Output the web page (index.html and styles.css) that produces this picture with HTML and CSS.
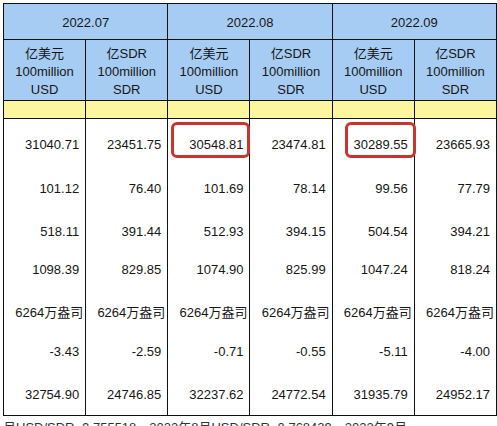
FILE: index.html
```html
<!DOCTYPE html>
<html lang="zh">
<head>
  <meta charset="UTF-8" />
  <meta name="viewport" content="width=device-width, initial-scale=1.0" />
  <title>外汇储备 2022.07 - 2022.09</title>
  <link rel="stylesheet" href="styles.css">
</head>
<body>
  <table class="reserve-table">
    <colgroup>
      <col><col><col><col><col><col>
    </colgroup>
    <thead>
      <tr class="month-row">
        <th colspan="2">2022.07</th>
        <th colspan="2">2022.08</th>
        <th colspan="2">2022.09</th>
      </tr>
      <tr class="unit-row">
        <th>亿美元<br>100million<br>USD</th>
        <th>亿SDR<br>100million<br>SDR</th>
        <th>亿美元<br>100million<br>USD</th>
        <th>亿SDR<br>100million<br>SDR</th>
        <th>亿美元<br>100million<br>USD</th>
        <th>亿SDR<br>100million<br>SDR</th>
      </tr>
      <tr class="spacer-row">
        <th></th><th></th><th></th><th></th><th></th><th></th>
      </tr>
    </thead>
    <tbody>
      <tr class="r1">
        <td>31040.71</td>
        <td>23451.75</td>
        <td class="marked"><span class="mark mark-a"></span>30548.81</td>
        <td>23474.81</td>
        <td class="marked"><span class="mark mark-b"></span>30289.55</td>
        <td>23665.93</td>
      </tr>
      <tr class="r2">
        <td>101.12</td><td>76.40</td><td>101.69</td><td>78.14</td><td>99.56</td><td>77.79</td>
      </tr>
      <tr class="r3">
        <td>518.11</td><td>391.44</td><td>512.93</td><td>394.15</td><td>504.54</td><td>394.21</td>
      </tr>
      <tr class="r4">
        <td>1098.39</td><td>829.85</td><td>1074.90</td><td>825.99</td><td>1047.24</td><td>818.24</td>
      </tr>
      <tr class="r5">
        <td>6264万盎司</td><td>6264万盎司</td><td>6264万盎司</td><td>6264万盎司</td><td>6264万盎司</td><td>6264万盎司</td>
      </tr>
      <tr class="r6">
        <td>-3.43</td><td>-2.59</td><td>-0.71</td><td>-0.55</td><td>-5.11</td><td>-4.00</td>
      </tr>
      <tr class="r7">
        <td>32754.90</td><td>24746.85</td><td>32237.62</td><td>24772.54</td><td>31935.79</td><td>24952.17</td>
      </tr>
    </tbody>
  </table>

  <p class="footnote">月USD/SDR=0.755518，2022年8月USD/SDR=0.768429，2022年9月USD/SDR=0.781323</p>
</body>
</html>
```

FILE: styles.css
```css
:root {
  --line-color: #111111;
  --text-color: #161616;
  --head-blue: #a7ccf3;
  --head-yellow: #fcf79e;
  --mark-red: #c8352c;
}

* {
  box-sizing: border-box;
  margin: 0;
  padding: 0;
}

body {
  font-family: "Liberation Sans", Arial, "Noto Sans CJK SC", sans-serif;
  color: var(--text-color);
  background: #ffffff;
  padding: 3px 0 0 3px;
  font-size: 13px;
}

.reserve-table {
  width: 494px;
  table-layout: fixed;
  border-collapse: collapse;
  border: 1px solid var(--line-color);
}

.reserve-table th,
.reserve-table td {
  border-left: 1px solid var(--line-color);
  border-right: 1px solid var(--line-color);
}

.reserve-table th {
  font-weight: 400;
  text-align: center;
  background: var(--head-blue);
  border-bottom: 1px solid var(--line-color);
}

.month-row th {
  height: 36px;
  padding-top: 2px;
  vertical-align: middle;
}

.unit-row th {
  height: 61px;
  line-height: 18px;
  padding-top: 5px;
  vertical-align: top;
}

.spacer-row th {
  height: 18px;
  background: var(--head-yellow);
}

.reserve-table td {
  text-align: right;
  vertical-align: bottom;
  line-height: 15px;
  padding: 0 6px 13px 0;
  white-space: nowrap;
}

.r1 td { height: 46px; }
.r2 td { height: 44px; }
.r3 td { height: 43px; }
.r4 td { height: 38px; }
.r5 td { height: 43px; padding-right: 2px; }
.r6 td { height: 39px; }
.r7 td { height: 44px; }

.marked {
  position: relative;
}

.mark {
  position: absolute;
  top: 3px;
  bottom: 7px;
  border: 3px solid var(--mark-red);
  border-radius: 6px;
}

.mark-a {
  left: 3px;
  right: -1px;
}

.mark-b {
  left: 12px;
  right: -2px;
}

.footnote {
  margin-top: 4px;
  max-width: 490px;
  font-size: 13px;
  line-height: 16px;
  color: #333333;
}
```
